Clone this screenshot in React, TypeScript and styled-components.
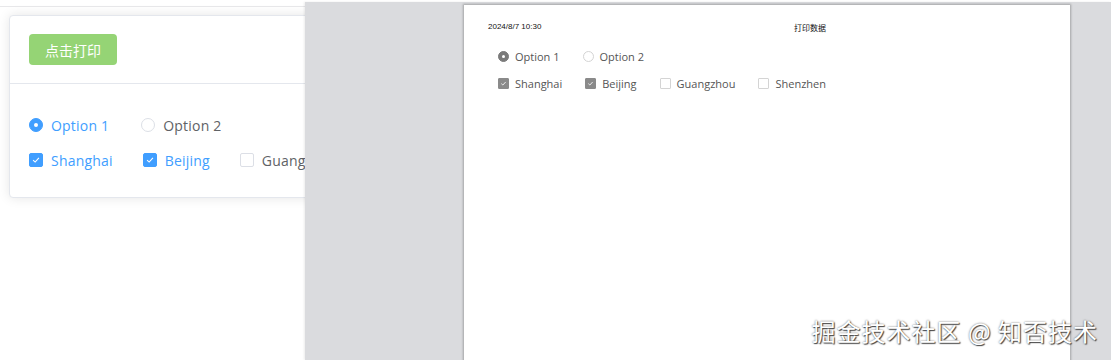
import styled, { createGlobalStyle } from 'styled-components';

const GlobalStyle = createGlobalStyle`
  html, body {
    margin: 0;
    padding: 0;
    background: #ffffff;
  }
  body {
    font-family: "Open Sans", "Noto Sans CJK SC", sans-serif;
  }
`;

const radios = [
  { label: 'Option 1', checked: true },
  { label: 'Option 2', checked: false },
];

const cities = [
  { label: 'Shanghai', checked: true },
  { label: 'Beijing', checked: true },
  { label: 'Guangzhou', checked: false },
  { label: 'Shenzhen', checked: false },
];

const CheckMark = ({ size, color }: { size: number; color: string }) => (
  <svg width={size} height={size} viewBox="0 0 14 14">
    <path d="M3.6 7.2 L6 9.4 L10.4 4.6" fill="none" stroke={color} strokeWidth="1.3" />
  </svg>
);

const App = () => {
  return (
    <Screen>
      <GlobalStyle />
      <Page>
        <Card>
          <CardHeader>
            <PrintButton>点击打印</PrintButton>
          </CardHeader>
          <CardBody>
            <Row>
              {radios.map((r) => (
                <Choice key={r.label} $on={r.checked}>
                  <Radio $on={r.checked} />
                  {r.label}
                </Choice>
              ))}
            </Row>
            <Row>
              {cities.map((c) => (
                <Choice key={c.label} $on={c.checked} $box>
                  <Box $on={c.checked}>{c.checked && <CheckMark size={12} color="#fff" />}</Box>
                  {c.label}
                </Choice>
              ))}
            </Row>
          </CardBody>
        </Card>
      </Page>

      <Preview>
        <Paper>
          <PaperHeader>
            <DateText>2024/8/7 10:30</DateText>
            <TitleText>打印数据</TitleText>
          </PaperHeader>
          <PaperRow>
            {radios.map((r) => (
              <PaperChoice key={r.label}>
                <PaperRadio $on={r.checked} />
                {r.label}
              </PaperChoice>
            ))}
          </PaperRow>
          <PaperRow>
            {cities.map((c) => (
              <PaperChoice key={c.label}>
                <PaperBox $on={c.checked}>{c.checked && <CheckMark size={11} color="#fff" />}</PaperBox>
                {c.label}
              </PaperChoice>
            ))}
          </PaperRow>
        </Paper>
        <Watermark>掘金技术社区 @ 知否技术</Watermark>
      </Preview>
    </Screen>
  );
};

export default App;

const Screen = styled.div`
  position: relative;
  width: 1111px;
  height: 360px;
  overflow: hidden;
  background: #ffffff;
`;

const Page = styled.div`
  margin-top: 6px;
  border-top: 1px solid #e8e8ea;
  padding: 8px 0 0 9px;
`;

const Card = styled.div`
  width: 560px;
  background: #fff;
  border: 1px solid #e4e7ed;
  border-radius: 4px;
  box-shadow: 0 0 12px rgba(0, 0, 0, 0.1);
`;

const CardHeader = styled.div`
  padding: 18px 19px;
  border-bottom: 1px solid #e4e7ed;
`;

const PrintButton = styled.button`
  width: 88px;
  height: 31px;
  border: none;
  border-radius: 4px;
  background: #95d475;
  color: #fff;
  font-family: "Noto Sans CJK SC", sans-serif;
  font-size: 14px;
  padding: 0;
`;

const CardBody = styled.div`
  padding: 31px 19px 27px;
  display: flex;
  flex-direction: column;
  gap: 15px;
`;

const Row = styled.div`
  display: flex;
  align-items: center;
`;

const Choice = styled.label<{ $on: boolean; $box?: boolean }>`
  display: flex;
  align-items: center;
  gap: 8px;
  height: 20px;
  margin-right: ${({ $box }) => ($box ? '30px' : '32px')};
  font-size: 14px;
  letter-spacing: 0.2px;
  color: ${({ $on }) => ($on ? '#409eff' : '#606266')};
  white-space: nowrap;
`;

const Radio = styled.span<{ $on: boolean }>`
  box-sizing: border-box;
  width: 14px;
  height: 14px;
  border-radius: 50%;
  border: 1px solid ${({ $on }) => ($on ? '#409eff' : '#dcdfe6')};
  background: ${({ $on }) => ($on ? '#409eff' : '#fff')};
  display: flex;
  align-items: center;
  justify-content: center;
  &::after {
    content: '';
    width: 4px;
    height: 4px;
    border-radius: 50%;
    background: #fff;
    display: ${({ $on }) => ($on ? 'block' : 'none')};
  }
`;

const Box = styled.span<{ $on: boolean }>`
  box-sizing: border-box;
  width: 14px;
  height: 14px;
  border-radius: 2px;
  border: 1px solid ${({ $on }) => ($on ? '#409eff' : '#dcdfe6')};
  background: ${({ $on }) => ($on ? '#409eff' : '#fff')};
  display: flex;
  align-items: center;
  justify-content: center;
`;

const Preview = styled.div`
  position: absolute;
  left: 305px;
  top: 2px;
  right: 0;
  bottom: 0;
  background: #dadbde;
  box-shadow: -1px 0 2px rgba(0, 0, 0, 0.08);
  padding: 3px 0 0 159px;
`;

const Paper = styled.div`
  width: 606px;
  height: 400px;
  background: #fff;
  box-shadow: 0 0 2px 1px rgba(0, 0, 0, 0.25);
  padding: 15px 0 0 24px;
  box-sizing: border-box;
`;

const PaperHeader = styled.div`
  display: flex;
  align-items: center;
  height: 12px;
  font-family: "Liberation Sans", Arial, "Noto Sans CJK SC", sans-serif;
  font-size: 8px;
  color: #111;
`;

const DateText = styled.span``;

const TitleText = styled.span`
  margin-left: auto;
  margin-right: 244px;
  font-family: "Noto Sans CJK SC", sans-serif;
  transform: translateY(1px);
`;

const PaperRow = styled.div`
  display: flex;
  align-items: center;
  padding-left: 10px;
  height: 18px;
  margin-top: 15px;
  & + & {
    margin-top: 9px;
  }
`;

const PaperChoice = styled.span`
  display: flex;
  align-items: center;
  gap: 6px;
  margin-right: 23px;
  font-size: 11px;
  color: #555;
  white-space: nowrap;
`;

const PaperRadio = styled.span<{ $on: boolean }>`
  box-sizing: border-box;
  width: 11px;
  height: 11px;
  border-radius: 50%;
  border: 1px solid ${({ $on }) => ($on ? '#7a7a7a' : '#d4d4d4')};
  background: ${({ $on }) => ($on ? '#7a7a7a' : '#fff')};
  display: flex;
  align-items: center;
  justify-content: center;
  &::after {
    content: '';
    width: 3px;
    height: 3px;
    border-radius: 50%;
    background: #fff;
    display: ${({ $on }) => ($on ? 'block' : 'none')};
  }
`;

const PaperBox = styled.span<{ $on: boolean }>`
  box-sizing: border-box;
  width: 11px;
  height: 11px;
  border-radius: 1px;
  border: 1px solid ${({ $on }) => ($on ? '#8a8a8a' : '#d4d4d4')};
  background: ${({ $on }) => ($on ? '#8a8a8a' : '#fff')};
  display: flex;
  align-items: center;
  justify-content: center;
`;

const Watermark = styled.div`
  position: absolute;
  right: 13px;
  bottom: 12px;
  font-family: "Noto Sans CJK SC", sans-serif;
  font-size: 24px;
  color: #ffffff;
  letter-spacing: 1px;
  text-shadow: 1px 1px 1px #444, 0 0 2px rgba(0, 0, 0, 0.6);
`;
